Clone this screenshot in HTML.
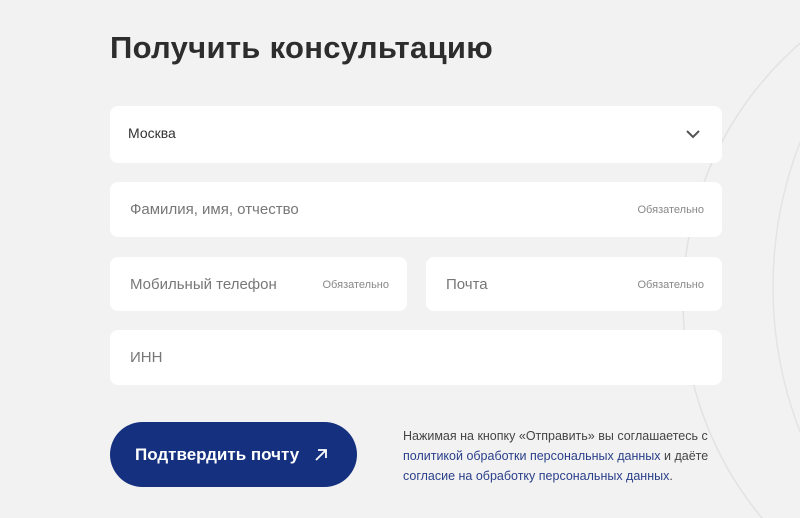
<!DOCTYPE html>
<html><head><meta charset="utf-8"><style>
html,body{margin:0;width:800px;height:518px;overflow:hidden}
body{background:#f2f2f2;font-family:"Liberation Sans",sans-serif;position:relative}
svg.bg{position:absolute;left:0;top:0;display:block}
h1{position:absolute;left:110px;top:30px;margin:0;font-size:31px;font-weight:bold;color:#2d2d2d;letter-spacing:0.3px}
.f{position:absolute;background:#fff;border-radius:8px;height:56px}
.f .p{position:absolute;left:20px;top:19px;font-size:15px;color:#777}
.f .r{position:absolute;right:18px;top:22px;font-size:11px;color:#888}
.btn{position:absolute;left:110px;top:422px;width:247px;height:65px;border-radius:33px;background:#14307f;color:#fff;font-size:17px;font-weight:bold;line-height:65px;text-indent:25px}
.t{position:absolute;left:403px;top:426px;font-size:12.5px;line-height:20px;color:#444}
.t a{color:#2a3f8a;text-decoration:none}
</style></head><body>
<svg class="bg" width="800" height="518"><circle cx="1023" cy="300" r="340" fill="none" stroke="#e2e2e2" stroke-width="1.5"/><circle cx="1173" cy="287" r="400" fill="none" stroke="#e4e4e4" stroke-width="1.5"/></svg>
<h1>Получить консультацию</h1>
<div class="f" style="left:110px;top:106px;width:612px;height:57px"><span class="p" style="left:18px;color:#333;font-size:14px">Москва</span>
<svg style="position:absolute;right:22px;top:23px" width="14" height="10"><path d="M1 2l6 6 6-6" fill="none" stroke="#555" stroke-width="2"/></svg></div>
<div class="f" style="left:110px;top:182px;width:612px;height:55px"><span class="p">Фамилия, имя, отчество</span><span class="r">Обязательно</span></div>
<div class="f" style="left:110px;top:257px;width:297px;height:54px"><span class="p">Мобильный телефон</span><span class="r">Обязательно</span></div>
<div class="f" style="left:426px;top:257px;width:296px;height:54px"><span class="p">Почта</span><span class="r">Обязательно</span></div>
<div class="f" style="left:110px;top:330px;width:612px;height:55px"><span class="p">ИНН</span></div>
<div class="btn">Подтвердить почту <svg style="position:absolute;left:204px;top:26px" width="14" height="14"><path d="M2 12L12 2M4 2h8v8" fill="none" stroke="#fff" stroke-width="1.8"/></svg></div>
<div class="t">Нажимая на кнопку «Отправить» вы соглашаетесь с<br><a>политикой обработки персональных данных</a> и даёте<br><a>согласие на обработку персональных данных</a>.</div>
</body></html>
